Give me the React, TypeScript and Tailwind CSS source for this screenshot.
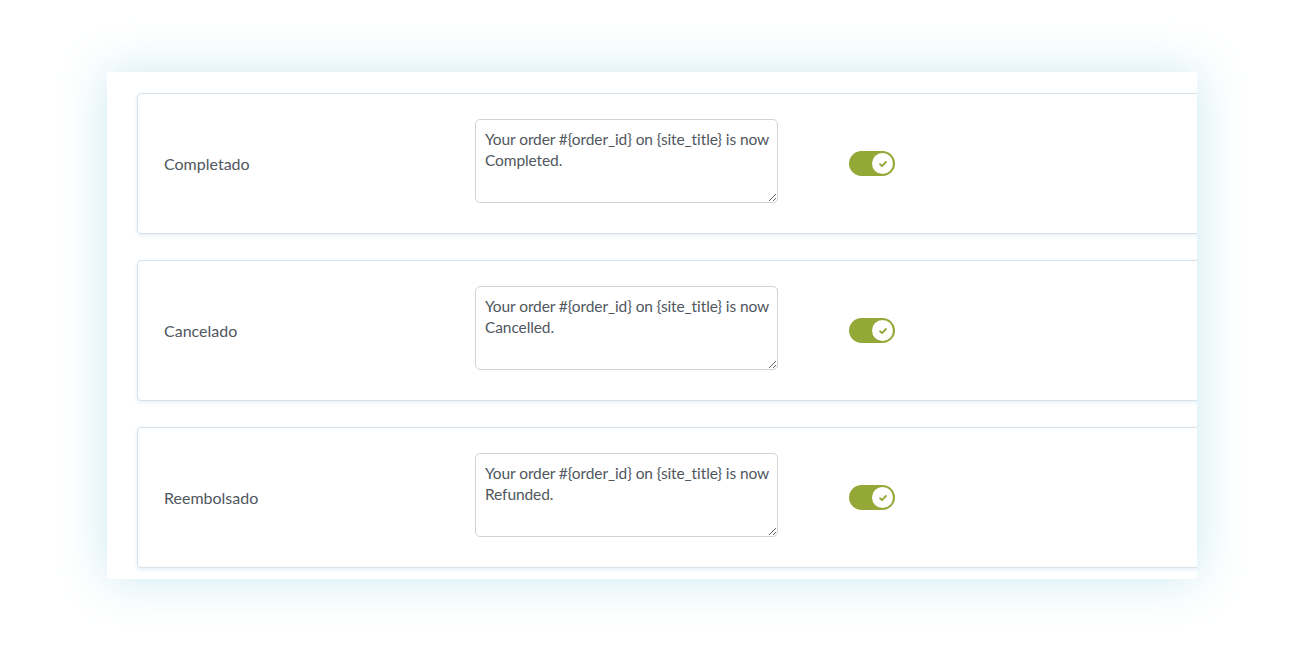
import React from 'react';

const ROWS = [
  { label: 'Completado', text: 'Your order #{order_id} on {site_title} is now Completed.' },
  { label: 'Cancelado', text: 'Your order #{order_id} on {site_title} is now Cancelled.' },
  { label: 'Reembolsado', text: 'Your order #{order_id} on {site_title} is now Refunded.' },
];

const Toggle: React.FC = () => (
  <div className="w-[46px] h-[25px] rounded-full bg-[#94a837] flex items-center justify-end pr-[2px]">
    <div className="w-[21px] h-[21px] rounded-full bg-white flex items-center justify-center">
      <svg width="10" height="10" viewBox="0 0 12 12" fill="none">
        <path d="M2.5 6.3l2.3 2.3 4.7-5" stroke="#94a837" strokeWidth="2.2" strokeLinecap="round" strokeLinejoin="round" />
      </svg>
    </div>
  </div>
);

const App: React.FC = () => {
  return (
    <div className="min-h-[653px] bg-white pt-[72px] pl-[107px]" style={{ fontFamily: 'Lato, "Open Sans", sans-serif' }}>
      <div className="w-[1090px] h-[507px] bg-white overflow-hidden shadow-[0_0_45px_rgba(140,208,225,0.45)]">
        <div className="pl-[30px] pt-[21px] flex flex-col gap-[26px]">
          {ROWS.map((row) => (
            <div
              key={row.label}
              className="w-[1090px] h-[141px] shrink-0 bg-white border border-[#d6e1ea] rounded-[4px] shadow-[0_2px_4px_rgba(190,215,235,0.35)] flex items-center"
            >
              <div className="w-[337px] pl-[26px] text-[16px] text-[#50575e]">{row.label}</div>
              <textarea
                readOnly
                defaultValue={row.text}
                className="w-[303px] h-[84px] mb-[5px] border border-[#cfd4da] rounded-[5px] pl-[9px] pr-[3px] py-[9px] text-[15.5px] tracking-[-0.1px] leading-[21px] text-[#50575e] bg-white outline-none resize-y"
              />
              <div className="ml-[71px]">
                <Toggle />
              </div>
            </div>
          ))}
        </div>
      </div>
    </div>
  );
};

export default App;
